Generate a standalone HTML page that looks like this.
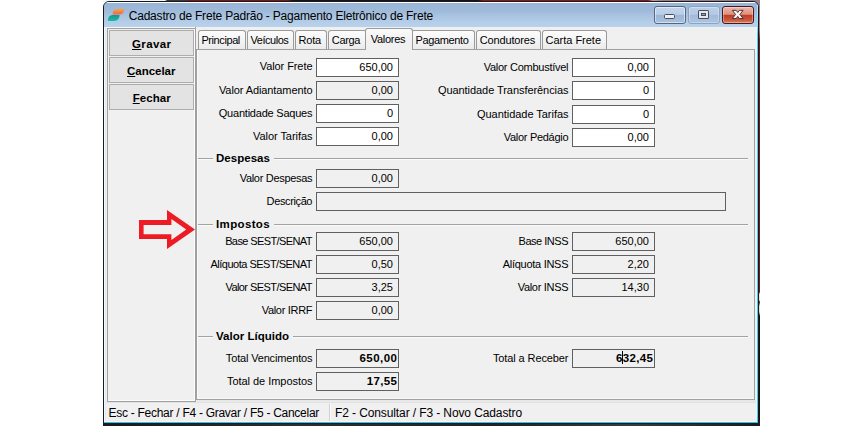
<!DOCTYPE html>
<html lang="pt-BR"><head><meta charset="utf-8"><title>Cadastro de Frete Padrão</title>
<style>
html,body{margin:0;padding:0;background:#fff;}
body{width:862px;height:426px;position:relative;overflow:hidden;font-family:"Liberation Sans", sans-serif;color:#000;}
div{position:absolute;box-sizing:content-box;}
.t{white-space:pre;line-height:16px;height:16px;z-index:5;}
.in{border:1px solid #606060;}
.sep{height:1px;background:#a2a2a2;box-shadow:0 1px 0 #fafafa;}
.tab{top:30px;height:18px;border:1px solid #9a9a9a;border-bottom:none;border-radius:3px 3px 0 0;background:linear-gradient(#fcfcfc,#f4f4f4 50%,#ebebeb);font-size:11px;line-height:18px;text-align:center;white-space:pre;letter-spacing:-0.15px;}
.tab.sel{top:28px;height:21px;background:#f4f4f4;background:linear-gradient(#fafafa,#f0f0f0 60%);line-height:20px;z-index:3;}
.btn{left:109px;width:83px;height:24px;border:1px solid #adadad;background:#e3e3e3;font-size:12px;font-weight:700;text-align:center;line-height:28px;}
.btn u{text-decoration:underline;}
.cb{top:6px;height:16px;border:1px solid #62779a;border-radius:3px;box-shadow:inset 0 0 0 1px rgba(255,255,255,.5);}
</style></head><body>
<!-- desktop strips behind window -->
<div style="left:103px;top:0;width:657px;height:2px;background:linear-gradient(90deg,#f4f6f8 0,#f4f6f8 62px,#3a3a3c 64px,#3a3a3c 82px,#7a1518 85px,#7a1518 185px,#1a1216 190px,#1a1216 375px,#86191d 380px,#86191d 545px,#c49aa0 550px,#9a808a 560px,#9a808a 100%)"></div>
<div style="left:759px;top:0;width:1px;height:426px;background:linear-gradient(#9a808a 0,#9a808a 30px,#6e1a1c 40px,#6e1a1c 292px,#e6e6e6 294px,#e6e6e6 300px,#222 302px,#e0e0e0 306px,#e0e0e0 312px,#111 316px,#111 100%)"></div>
<div style="left:752px;top:0;width:8px;height:8px;background:#9a808a"></div>
<div style="left:103px;top:420px;width:657px;height:6px;background:linear-gradient(90deg,#1a1a1a,#2e2e2e 30%,#222 60%,#3a3a3a 80%,#1c1c1c)"></div>
<!-- window frame -->
<div style="left:103px;top:1px;width:654px;height:421px;border:1px solid #1a1a1e;border-radius:6px 6px 0 0;background:#48cdec"></div>
<div style="left:104px;top:2px;width:654px;height:25px;border-radius:5px 5px 0 0;background:linear-gradient(#fdfeff 0,#fdfeff 1px,#9ab6d6 1px,#9eb9d9 8px,#a9c4e1 14px,#b4cde8 20px,#b9d2ec 25px);"></div>
<div style="left:104px;top:27px;width:654px;height:395px;background:#f2f8fd"></div>
<div style="left:757px;top:5px;width:1px;height:418px;background:linear-gradient(#b5ecfa 0,#7fe0f6 22px,#3fd0f0 30px)"></div>
<div style="left:104px;top:422px;width:654px;height:1px;background:#2bc6ea"></div>
<!-- client -->
<div style="left:106px;top:27px;width:650px;height:394px;background:#f0f0f0"></div>
<div style="left:105px;top:27px;width:1px;height:394px;background:#dfe9f5"></div>
<div style="left:106px;top:27px;width:89px;height:1px;background:#f8f9fb"></div>
<!-- app icon -->
<svg style="position:absolute;left:106px;top:7px" width="20" height="16" viewBox="106 7 20 16"><defs><linearGradient id="og" x1="0" y1="0" x2="0" y2="1"><stop offset="0" stop-color="#fba63c"/><stop offset="1" stop-color="#f4604c"/></linearGradient><linearGradient id="tg" x1="0" y1="0" x2="0" y2="1"><stop offset="0" stop-color="#0e998b"/><stop offset="1" stop-color="#21b9a5"/></linearGradient></defs><path d="M112.6 14.6C112.6 11 114.5 8.9 118 8.9H124.1C124.1 12.5 122.2 14.6 118.7 14.6Z" fill="url(#og)"/><path d="M107.9 20.9C107.9 17.2 109.8 15.1 113.3 15.1H119.5C119.5 18.8 117.6 20.9 114.1 20.9Z" fill="url(#tg)"/></svg>
<!-- caption buttons -->
<div class="cb" style="left:654px;width:30px;background:linear-gradient(#c3d5ec 0,#bacee7 46%,#9cb6d7 50%,#a9c1de 100%);border-color:#56667f"></div>
<div class="cb" style="left:688px;width:30px;background:linear-gradient(#bccfe8 0,#b5c9e5 46%,#a3bbdb 50%,#adc3e0 100%);border-color:#8da3c3;box-shadow:inset 0 0 0 1px rgba(255,255,255,.3)"></div>
<div class="cb" style="left:722px;width:30px;background:linear-gradient(#ecb8aa 0%,#df917d 46%,#c13c22 50%,#c8543a 78%,#d9805a 100%);border-color:#4a1620;box-shadow:inset 0 0 0 1px rgba(255,255,255,.35)"></div>
<div style="left:664px;top:14px;width:9px;height:3px;background:#f0f0f0;border:1px solid #454f5f;border-radius:1.5px"></div>
<div style="left:698px;top:10px;width:11px;height:9px;background:#434d5c;border-radius:1.5px"></div>
<div style="left:699px;top:11px;width:9px;height:7px;background:#e8e8e8"></div>
<div style="left:701px;top:13px;width:5px;height:3px;background:#434d5c"></div>
<div style="left:702px;top:14px;width:3px;height:1px;background:#88a6cf"></div>
<svg style="position:absolute;left:730px;top:8px" width="16" height="13" viewBox="-8 -6.5 16 13"><path d="M-5.4-4.1H-1.6L0-2L1.6-4.1H5.4L2.2 0L5.4 4.1H1.6L0 2L-1.6 4.1H-5.4L-2.2 0Z" transform="translate(-0.25 -0.05)" fill="#f7f7f7" stroke="#4b3438" stroke-width="1" stroke-linejoin="round"/></svg>
<!-- left button panel -->
<div style="left:107px;top:28px;width:87px;height:372px;border:1px solid #a0a0a0;background:#f0f0f0;box-shadow:inset -1px -1px 0 #fcfcfc"></div>
<div style="left:195px;top:27px;width:1px;height:375px;background:#a0a0a0"></div>
<div class="btn" style="top:30px"></div>
<div class="btn" style="top:57px"></div>
<div class="btn" style="top:84px"></div>
<!-- tab panel -->
<div style="left:196px;top:49px;width:557px;height:349px;border:1px solid #a0a0a0;background:#f0f0f0;box-shadow:inset 1px -1px 0 #f9f9f9"></div>
<div class="tab" style="left:198px;width:46px"></div>
<div class="tab" style="left:247px;width:45px"></div>
<div class="tab" style="left:295px;width:30px"></div>
<div class="tab" style="left:328px;width:37px"></div>
<div class="tab sel" style="left:365px;width:46px"></div>
<div class="tab" style="left:411px;width:62px"></div>
<div class="tab" style="left:476px;width:63px"></div>
<div class="tab" style="left:542px;width:63px"></div>
<div class="sep" style="left:198px;top:158px;width:15px"></div><div class="sep" style="left:274px;top:158px;width:474px"></div><div class="sep" style="left:198px;top:224px;width:15px"></div><div class="sep" style="left:274px;top:224px;width:474px"></div><div class="sep" style="left:198px;top:336px;width:15px"></div><div class="sep" style="left:293px;top:336px;width:455px"></div>
<div class="in" style="left:316px;top:58px;width:81px;height:17px;background:#fff"></div>
<div class="in" style="left:316px;top:81px;width:81px;height:17px;background:#f0f0f0"></div>
<div class="in" style="left:316px;top:104px;width:81px;height:17px;background:#fff"></div>
<div class="in" style="left:316px;top:127px;width:81px;height:17px;background:#fff"></div>
<div class="in" style="left:572px;top:58px;width:81px;height:17px;background:#fff"></div>
<div class="in" style="left:572px;top:81px;width:81px;height:17px;background:#fff"></div>
<div class="in" style="left:572px;top:105px;width:81px;height:17px;background:#fff"></div>
<div class="in" style="left:572px;top:128px;width:81px;height:17px;background:#fff"></div>
<div class="in" style="left:316px;top:169px;width:81px;height:17px;background:#f0f0f0"></div>
<div class="in" style="left:316px;top:192px;width:408px;height:17px;background:#f0f0f0"></div>
<div class="in" style="left:316px;top:232px;width:81px;height:17px;background:#f0f0f0"></div>
<div class="in" style="left:316px;top:255px;width:81px;height:17px;background:#f0f0f0"></div>
<div class="in" style="left:316px;top:278px;width:81px;height:17px;background:#f0f0f0"></div>
<div class="in" style="left:316px;top:301px;width:81px;height:17px;background:#f0f0f0"></div>
<div class="in" style="left:572px;top:232px;width:81px;height:17px;background:#f0f0f0"></div>
<div class="in" style="left:572px;top:255px;width:81px;height:17px;background:#f0f0f0"></div>
<div class="in" style="left:572px;top:278px;width:81px;height:17px;background:#f0f0f0"></div>
<div class="in" style="left:316px;top:349px;width:81px;height:17px;background:#f0f0f0"></div>
<div class="in" style="left:316px;top:372px;width:81px;height:17px;background:#f0f0f0"></div>
<div class="in" style="left:572px;top:349px;width:81px;height:17px;background:#f0f0f0"></div>
<div class="t" style="top:58px;font-size:11px;letter-spacing:-0.081px;right:549.58px;">Valor Frete</div>
<div class="t" style="top:82px;font-size:11px;letter-spacing:-0.095px;right:549.59px;">Valor Adiantamento</div>
<div class="t" style="top:105px;font-size:11px;letter-spacing:-0.221px;right:549.72px;">Quantidade Saques</div>
<div class="t" style="top:128px;font-size:11px;letter-spacing:-0.048px;right:549.55px;">Valor Tarifas</div>
<div class="t" style="top:170px;font-size:11px;letter-spacing:-0.310px;right:549.81px;">Valor Despesas</div>
<div class="t" style="top:193px;font-size:11px;letter-spacing:-0.378px;right:549.88px;">Descrição</div>
<div class="t" style="top:233px;font-size:11px;letter-spacing:-0.600px;right:550.10px;">Base SEST/SENAT</div>
<div class="t" style="top:256px;font-size:11px;letter-spacing:-0.504px;right:550.00px;">Alíquota SEST/SENAT</div>
<div class="t" style="top:279px;font-size:11px;letter-spacing:-0.566px;right:550.07px;">Valor SEST/SENAT</div>
<div class="t" style="top:302px;font-size:11px;letter-spacing:-0.309px;right:549.81px;">Valor IRRF</div>
<div class="t" style="top:350px;font-size:11px;letter-spacing:-0.164px;right:549.66px;">Total Vencimentos</div>
<div class="t" style="top:373px;font-size:11px;letter-spacing:-0.042px;right:549.54px;">Total de Impostos</div>
<div class="t" style="top:59px;font-size:11px;letter-spacing:-0.268px;right:293.77px;">Valor Combustível</div>
<div class="t" style="top:82px;font-size:11px;letter-spacing:-0.064px;right:293.56px;">Quantidade Transferências</div>
<div class="t" style="top:106px;font-size:11px;letter-spacing:-0.036px;right:293.54px;">Quantidade Tarifas</div>
<div class="t" style="top:129px;font-size:11px;letter-spacing:-0.292px;right:293.79px;">Valor Pedágio</div>
<div class="t" style="top:233px;font-size:11px;letter-spacing:-0.479px;right:293.98px;">Base INSS</div>
<div class="t" style="top:256px;font-size:11px;letter-spacing:-0.276px;right:293.78px;">Alíquota INSS</div>
<div class="t" style="top:279px;font-size:11px;letter-spacing:-0.309px;right:293.81px;">Valor INSS</div>
<div class="t" style="top:350px;font-size:11px;letter-spacing:-0.103px;right:293.60px;">Total a Receber</div>
<div class="t" style="top:150px;font-size:11.5px;font-weight:700;letter-spacing:0.035px;left:216px;">Despesas</div>
<div class="t" style="top:216px;font-size:11.5px;font-weight:700;letter-spacing:0.359px;left:216px;">Impostos</div>
<div class="t" style="top:328px;font-size:11.5px;font-weight:700;letter-spacing:0.012px;left:216px;">Valor Líquido</div>
<div class="t" style="top:7.6px;font-size:12px;letter-spacing:-0.200px;left:128.7px;">Cadastro de Frete Padrão - Pagamento Eletrônico de Frete</div>
<div class="t" style="top:405px;font-size:12px;letter-spacing:-0.275px;left:108.5px;">Esc - Fechar / F4 - Gravar / F5 - Cancelar</div>
<div class="t" style="top:405px;font-size:12px;letter-spacing:-0.107px;left:335px;">F2 - Consultar / F3 - Novo Cadastro</div>
<div class="t" style="top:59px;font-size:11px;right:469.00px;">650,00</div>
<div class="t" style="top:82px;font-size:11px;right:469.00px;">0,00</div>
<div class="t" style="top:105px;font-size:11px;right:469.00px;">0</div>
<div class="t" style="top:128px;font-size:11px;right:469.00px;">0,00</div>
<div class="t" style="top:170px;font-size:11px;right:469.00px;">0,00</div>
<div class="t" style="top:233px;font-size:11px;right:469.00px;">650,00</div>
<div class="t" style="top:256px;font-size:11px;right:469.00px;">0,50</div>
<div class="t" style="top:279px;font-size:11px;right:469.00px;">3,25</div>
<div class="t" style="top:302px;font-size:11px;right:469.00px;">0,00</div>
<div class="t" style="top:350px;font-size:11.5px;font-weight:700;letter-spacing:0.469px;right:464.53px;">650,00</div>
<div class="t" style="top:373px;font-size:11.5px;font-weight:700;letter-spacing:0.344px;right:464.66px;">17,55</div>
<div class="t" style="top:59px;font-size:11px;right:213.00px;">0,00</div>
<div class="t" style="top:82px;font-size:11px;right:213.00px;">0</div>
<div class="t" style="top:106px;font-size:11px;right:213.00px;">0</div>
<div class="t" style="top:129px;font-size:11px;right:213.00px;">0,00</div>
<div class="t" style="top:233px;font-size:11px;right:213.00px;">650,00</div>
<div class="t" style="top:256px;font-size:11px;right:213.00px;">2,20</div>
<div class="t" style="top:279px;font-size:11px;right:213.00px;">14,30</div>
<div class="t" style="top:350px;font-size:11.5px;font-weight:700;letter-spacing:0.385px;right:208.61px;">632,45</div>
<div class="t" style="top:32px;font-size:11px;letter-spacing:-0.410px;left:201.4px;">Principal</div>
<div class="t" style="top:32px;font-size:11px;letter-spacing:-0.474px;left:250.6px;">Veículos</div>
<div class="t" style="top:32px;font-size:11px;letter-spacing:-0.213px;left:298.6px;">Rota</div>
<div class="t" style="top:32px;font-size:11px;letter-spacing:-0.334px;left:331.8px;">Carga</div>
<div class="t" style="top:31px;font-size:11px;letter-spacing:-0.298px;left:370.8px;">Valores</div>
<div class="t" style="top:32px;font-size:11px;letter-spacing:-0.352px;left:415.4px;">Pagamento</div>
<div class="t" style="top:32px;font-size:11px;letter-spacing:-0.137px;left:479.7px;">Condutores</div>
<div class="t" style="top:32px;font-size:11px;letter-spacing:-0.013px;left:545.5px;">Carta Frete</div>
<div class="t" style="top:36px;font-size:11.5px;font-weight:700;letter-spacing:0.368px;left:132px;"><u>G</u>ravar</div>
<div class="t" style="top:63px;font-size:11.5px;font-weight:700;letter-spacing:-0.024px;left:127px;"><u>C</u>ancelar</div>
<div class="t" style="top:90px;font-size:11.5px;font-weight:700;letter-spacing:0.047px;left:132.7px;"><u>F</u>echar</div>
<!-- caret -->
<div style="left:622px;top:351px;width:1px;height:13px;background:#000"></div>
<!-- status bar -->
<div style="left:197px;top:400px;width:559px;height:2px;background:#e8e8e8"></div>
<div style="left:106px;top:402px;width:650px;height:1px;background:#e2e2e2"></div>
<div style="left:329px;top:404px;width:1px;height:17px;background:#d0d0d0;box-shadow:1px 0 0 #fafafa"></div>
<!-- red arrow -->
<svg style="position:absolute;left:136px;top:206px" width="62" height="46" viewBox="136 206 62 46"><path fill-rule="evenodd" fill="#ed1c24" d="M139 220H167V210L195 229.5L167 249V239H139ZM143.6 225V234.2H171.4V240L186.2 229.5L171.4 219V225Z"/></svg>
</body></html>
